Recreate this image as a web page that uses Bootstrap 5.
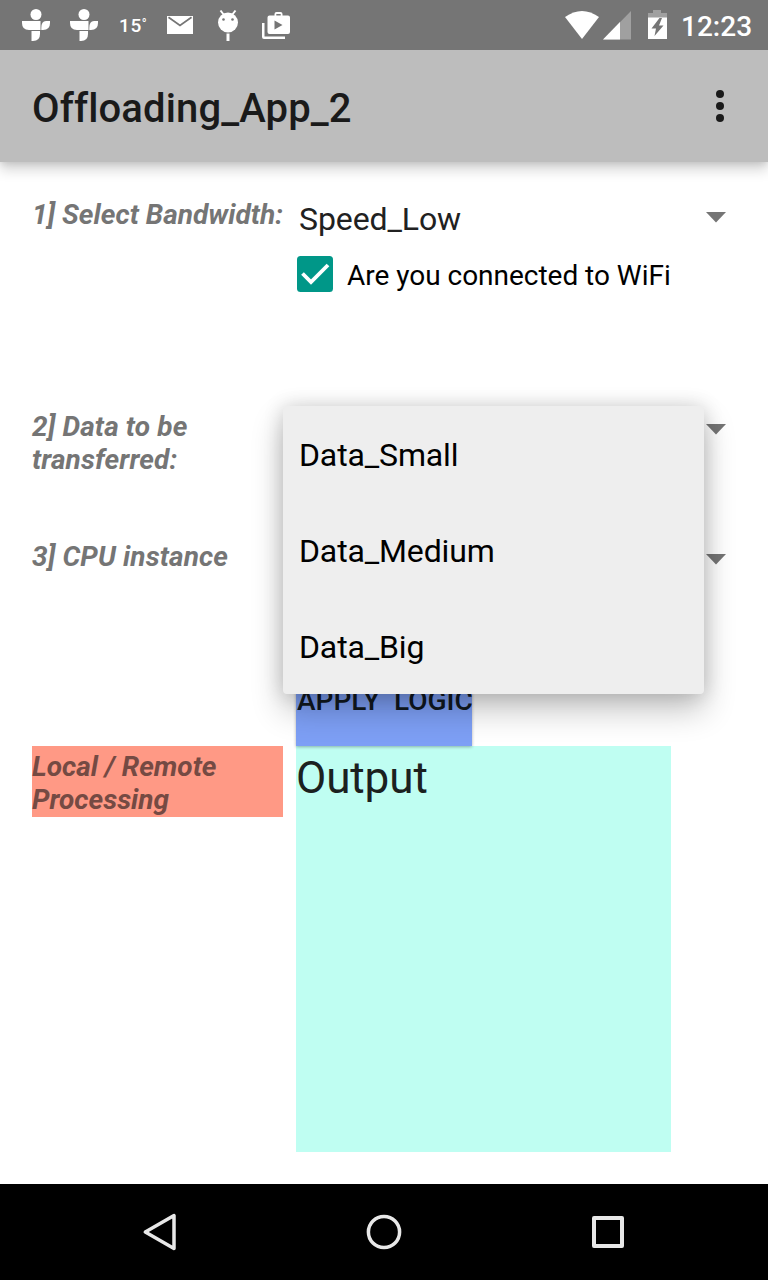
<!DOCTYPE html>
<html lang="en">
<head>
<meta charset="utf-8">
<meta name="viewport" content="width=device-width, initial-scale=1">
<title>Offloading_App_2</title>
<link href="https://cdn.jsdelivr.net/npm/bootstrap@5.3.0/dist/css/bootstrap.min.css" rel="stylesheet">
<style>
body { font-family: Roboto, "Liberation Sans", sans-serif; color: #212121; width: 768px; height: 1280px; overflow: hidden; font-variant-ligatures: none; }
svg { display: block; flex: none; }
.status-bar { height: 50px; background: #757575; color: #fff; position: relative; z-index: 2; }
.temp { width: 32px; font-size: 19px; font-weight: 500; line-height: 52px; letter-spacing: .6px; }
.temp span { font-size: 13px; vertical-align: 4px; }
.clock { width: 87px; font-size: 28px; font-weight: 500; line-height: 53px; }
.app-bar { height: 112px; background: #bdbdbd; color: #1a1a1a; z-index: 1; box-shadow: 0 8px 12px rgba(0,0,0,.16), 0 0 8px rgba(0,0,0,.16); }
.app-title { font-size: 40px; font-weight: 500; line-height: 112px; padding-top: 3px; margin-left: 32px; letter-spacing: .13px; }
.screen { padding: 32px; }
.form-line { display: grid; grid-template-columns: 251px 1fr; column-gap: 13px; }
.line-a { height: 212px; } .line-b { height: 130px; } .line-c { height: 210px; } .line-d { height: 406px; }
.field-name { font-size: 28px; line-height: 33px; font-weight: 700; font-style: italic; color: #757575; padding-top: 4px; }
.line-a .field-name { letter-spacing: .03px; }
.line-b .field-name, .line-c .field-name { letter-spacing: .13px; }
.result-name { background: #ff9985; color: #754a43; height: 71px; }
.spinner-box { height: 48px; padding: 0 10px 0 3px; font-size: 32px; line-height: 50px; letter-spacing: -.1px; }
.check-line { height: 64px; font-size: 28px; color: #000; gap: 14px; padding-left: 1px; white-space: nowrap; }
.check-line span { padding-top: 3px; letter-spacing: -.02px; }
.menu-pop { left: 251px; top: 0; width: 421px; background: #eee; color: #000; border-radius: 4px; z-index: 2; box-shadow: 0 16px 32px rgba(0,0,0,.24), 0 0 20px rgba(0,0,0,.16); }
.menu-opt { height: 96px; padding-left: 16px; font-size: 32px; line-height: 98px; letter-spacing: -.14px; }
.apply { width: 176px; height: 96px; background: #7d9ff5; color: #111820; font-size: 28px; font-weight: 500; line-height: 98px; white-space: pre; box-shadow: 0 1px 3px rgba(0,0,0,.3); }
.apply span { display: block; margin: 2px 0 0 1px; line-height: 98px; }
.output { width: 375px; background: #bffef2; font-size: 44px; line-height: 52px; padding-top: 6px; color: #1b211f; letter-spacing: -.1px; }
.nav-keys { height: 96px; }
</style>
</head>
<body class="d-flex flex-column bg-white">
<header class="status-bar d-flex justify-content-between">
  <div class="d-flex align-items-center">
    <svg width="119" height="50" fill="#fff">
      <g id="cross"><circle cx="36" cy="14.5" r="5.5"/><path d="M22 21H40.500V30H29Q22 30 22 23ZM41.300 30V28Q41.300 21 46 21H50V23Q50 30 43 30ZM31.500 31H40V34Q40 41 33 41H31.500Z"/></g>
      <use href="#cross" x="48"/>
    </svg>
    <div class="temp">15<span>°</span></div>
    <svg width="150" height="50" fill="#fff" style="margin-left:-1px">
      <path d="M17 16H43V34H17Z"/><path d="M18.500 17.200L30 25.500L41.500 17.200" fill="none" stroke="#757575" stroke-width="1.800"/><path d="M19 16H41L30 23.500Z"/>
      <circle cx="78" cy="22.500" r="10"/><path d="M70.500 10.500L74 15M85.500 10.500L82 15" stroke="#fff" stroke-width="2"/><g fill="#757575"><circle cx="73.500" cy="19.500" r="1.300"/><circle cx="82.500" cy="19.500" r="1.300"/></g><path d="M76.500 33.500h3V41h-3Z"/>
      <path fill-rule="evenodd" d="M119.500 15.500h5V14q0-2 2-2h4q2 0 2 2v1.500H138q2 0 2 2V32q0 2-2 2H119.500q-2 0-2-2V17.500q0-2 2-2ZM126.300 15.500h4.400V14h-4.400ZM124.500 20.500v9l8-4.500Z"/>
      <path d="M112 23h2.500V36.500H135V39H114q-2 0-2-2Z"/>
    </svg>
  </div>
  <div class="d-flex">
    <svg width="117" height="50" fill="#fff">
      <path d="M1 17Q18 5 35 17L18 39Z"/>
      <path d="M67 11V39.500H39Z" fill="#a0a0a0"/><path d="M56 22V39.500H39Z"/>
      <path d="M89 10h8v3h6v5H84v-5h5Z" fill="#a0a0a0"/><path d="M84 17.500h19V39H84Z"/><path d="M95.500 18L87.500 28.500H92L90.500 36L99.500 25.500H95L98 18Z" fill="#757575"/>
    </svg>
    <div class="clock">12:23</div>
  </div>
</header>
<div class="app-bar d-flex justify-content-between position-relative">
  <h1 class="app-title mb-0">Offloading_App_2</h1>
  <svg width="96" height="112" fill="#1a1a1a"><circle cx="48" cy="44" r="4"/><circle cx="48" cy="56" r="4"/><circle cx="48" cy="68" r="4"/></svg>
</div>
<main class="screen flex-grow-1">
  <section class="form-line line-a">
    <div class="field-name text-nowrap">1] Select Bandwidth:</div>
    <div>
      <div class="spinner-box d-flex justify-content-between"><span>Speed_Low</span>
        <svg width="20" height="48" fill="#757575"><path d="M0 18H20L10 28.500Z"/></svg></div>
      <label class="check-line d-flex align-items-center">
        <svg width="36" height="36"><rect width="36" height="36" rx="3.500" fill="#009788"/><path d="M5.500 17.500L14 26L31 9" fill="none" stroke="#fff" stroke-width="3.800"/></svg>
        <span>Are you connected to WiFi</span></label>
    </div>
  </section>
  <section class="form-line line-b position-relative">
    <div class="field-name">2] Data to be<br>transferred:</div>
    <div class="spinner-box d-flex justify-content-end"><svg width="20" height="48" fill="#757575"><path d="M0 18H20L10 28.500Z"/></svg></div>
    <div class="menu-pop position-absolute">
      <div class="menu-opt">Data_Small</div>
      <div class="menu-opt">Data_Medium</div>
      <div class="menu-opt">Data_Big</div>
    </div>
  </section>
  <section class="form-line line-c">
    <div class="field-name">3] CPU instance</div>
    <div class="d-flex flex-column justify-content-between">
      <div class="spinner-box d-flex justify-content-end"><svg width="20" height="48" fill="#757575"><path d="M0 18H20L10 28.500Z"/></svg></div>
      <button class="apply border-0 p-0 position-relative"><span>APPLY  LOGIC</span></button>
    </div>
  </section>
  <section class="form-line line-d">
    <div class="field-name result-name">Local / Remote<br>Processing</div>
    <div class="output">Output</div>
  </section>
</main>
<nav class="nav-keys bg-black d-flex justify-content-center">
  <svg width="224" height="96" fill="none" stroke="#e8e8e8" stroke-width="3.500" stroke-linejoin="round"><path d="M126.200 31.500V64.500L97.500 48Z" transform="translate(-.2)"/></svg>
  <svg width="224" height="96" fill="none" stroke="#e8e8e8" stroke-width="3.500"><circle cx="112" cy="48" r="15.600"/></svg>
  <svg width="224" height="96" fill="none" stroke="#e8e8e8" stroke-width="4" stroke-linejoin="round"><path d="M98 34H126V62H98Z"/></svg>
</nav>
<script src="https://cdn.jsdelivr.net/npm/bootstrap@5.3.0/dist/js/bootstrap.bundle.min.js"></script>
</body>
</html>
